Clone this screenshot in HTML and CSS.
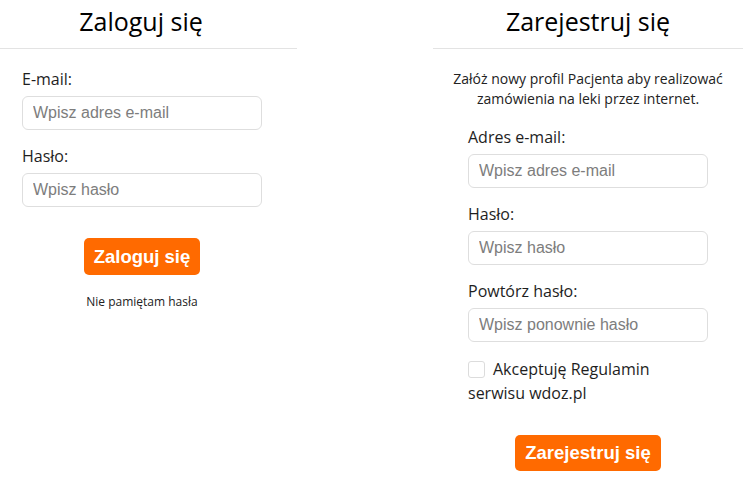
FILE: index.html
```html
<!DOCTYPE html>
<html lang="pl">
<head>
<meta charset="utf-8">
<title>Logowanie</title>
<link rel="stylesheet" href="styles.css">
</head>
<body>
<div class="page">
  <section class="col col-login">
    <h2 class="col-title">Zaloguj się</h2>
    <form class="form">
      <div class="group">
        <label class="label" for="l-email">E-mail:</label>
        <input class="input" id="l-email" type="email" placeholder="Wpisz adres e-mail">
      </div>
      <div class="group">
        <label class="label" for="l-pass">Hasło:</label>
        <input class="input" id="l-pass" type="password" placeholder="Wpisz hasło">
      </div>
      <div class="actions actions-login">
        <button class="btn" type="button">Zaloguj się</button>
      </div>
      <p class="forgot">Nie pamiętam hasła</p>
    </form>
  </section>
  <section class="col col-register">
    <h2 class="col-title">Zarejestruj się</h2>
    <p class="intro">Załóż nowy profil Pacjenta aby realizować zamówienia na leki przez internet.</p>
    <form class="form">
      <div class="group">
        <label class="label" for="r-email">Adres e-mail:</label>
        <input class="input" id="r-email" type="email" placeholder="Wpisz adres e-mail">
      </div>
      <div class="group">
        <label class="label" for="r-pass">Hasło:</label>
        <input class="input" id="r-pass" type="password" placeholder="Wpisz hasło">
      </div>
      <div class="group">
        <label class="label" for="r-pass2">Powtórz hasło:</label>
        <input class="input" id="r-pass2" type="password" placeholder="Wpisz ponownie hasło">
      </div>
      <div class="terms"><span class="check"></span>Akceptuję Regulamin serwisu wdoz.pl</div>
      <div class="actions actions-register">
        <button class="btn" type="button">Zarejestruj się</button>
      </div>
    </form>
  </section>
</div>
</body>
</html>
```
FILE: styles.css
```css
* { box-sizing: border-box; }
html, body { margin: 0; padding: 0; background: #fff; }
body {
  font-family: "Open Sans", "Liberation Sans", sans-serif;
  color: #222;
}
.page {
  display: flex;
  align-items: flex-start;
  gap: 136px;
  width: 752px;
  height: 497px;
}
.col-login { width: 297px; }
.col-register { width: 310px; }
.col-title {
  margin: 0;
  padding-top: 3px;
  font-size: 25px;
  line-height: 36px;
  font-weight: 500;
  color: #000;
  text-align: center;
  border-bottom: 1px solid #e3e3e3;
  height: 49px;
}
.col-login .col-title { padding-right: 15px; }
.col-login .form { width: 240px; margin: 18px 0 0 22px; }
.col-register .form { width: 240px; margin: 16px auto 0; }
.intro {
  margin: 20px 0 0;
  font-size: 14px;
  line-height: 20px;
  text-align: center;
  color: #222;
}
.group { margin-bottom: 14px; }
.label {
  display: block;
  font-size: 16px;
  line-height: 24px;
  margin-bottom: 5px;
  color: #1e1e1e;
}
.input {
  display: block;
  width: 240px;
  height: 34px;
  margin: 0;
  padding: 0 10px;
  border: 1px solid #dedede;
  border-radius: 6px;
  font-family: "Liberation Sans", Arial, sans-serif;
  font-size: 16px;
  color: #333;
  background: #fff;
  outline: none;
}
.input::placeholder { color: #7d7d7d; }
.actions { display: flex; justify-content: center; }
.actions-login { margin-top: 31px; }
.actions-register { margin-top: 30px; }
.btn {
  height: 37px;
  padding: 0 10px;
  border: none;
  border-radius: 5px;
  background: #ff6a00;
  color: #fff;
  font-family: "Liberation Sans", Arial, sans-serif;
  font-weight: 700;
  font-size: 18.5px;
  cursor: pointer;
}
.actions-register .btn { height: 36px; }
.forgot {
  margin: 18px 0 0;
  font-size: 12px;
  line-height: 18px;
  text-align: center;
  color: #222;
}
.terms {
  margin-top: 15px;
  font-size: 16px;
  line-height: 24px;
  color: #1e1e1e;
}
.check {
  display: inline-block;
  width: 17px;
  height: 17px;
  border: 1px solid #dcdcdc;
  border-radius: 3px;
  vertical-align: -3px;
  margin-right: 8px;
  background: #fff;
}
```
